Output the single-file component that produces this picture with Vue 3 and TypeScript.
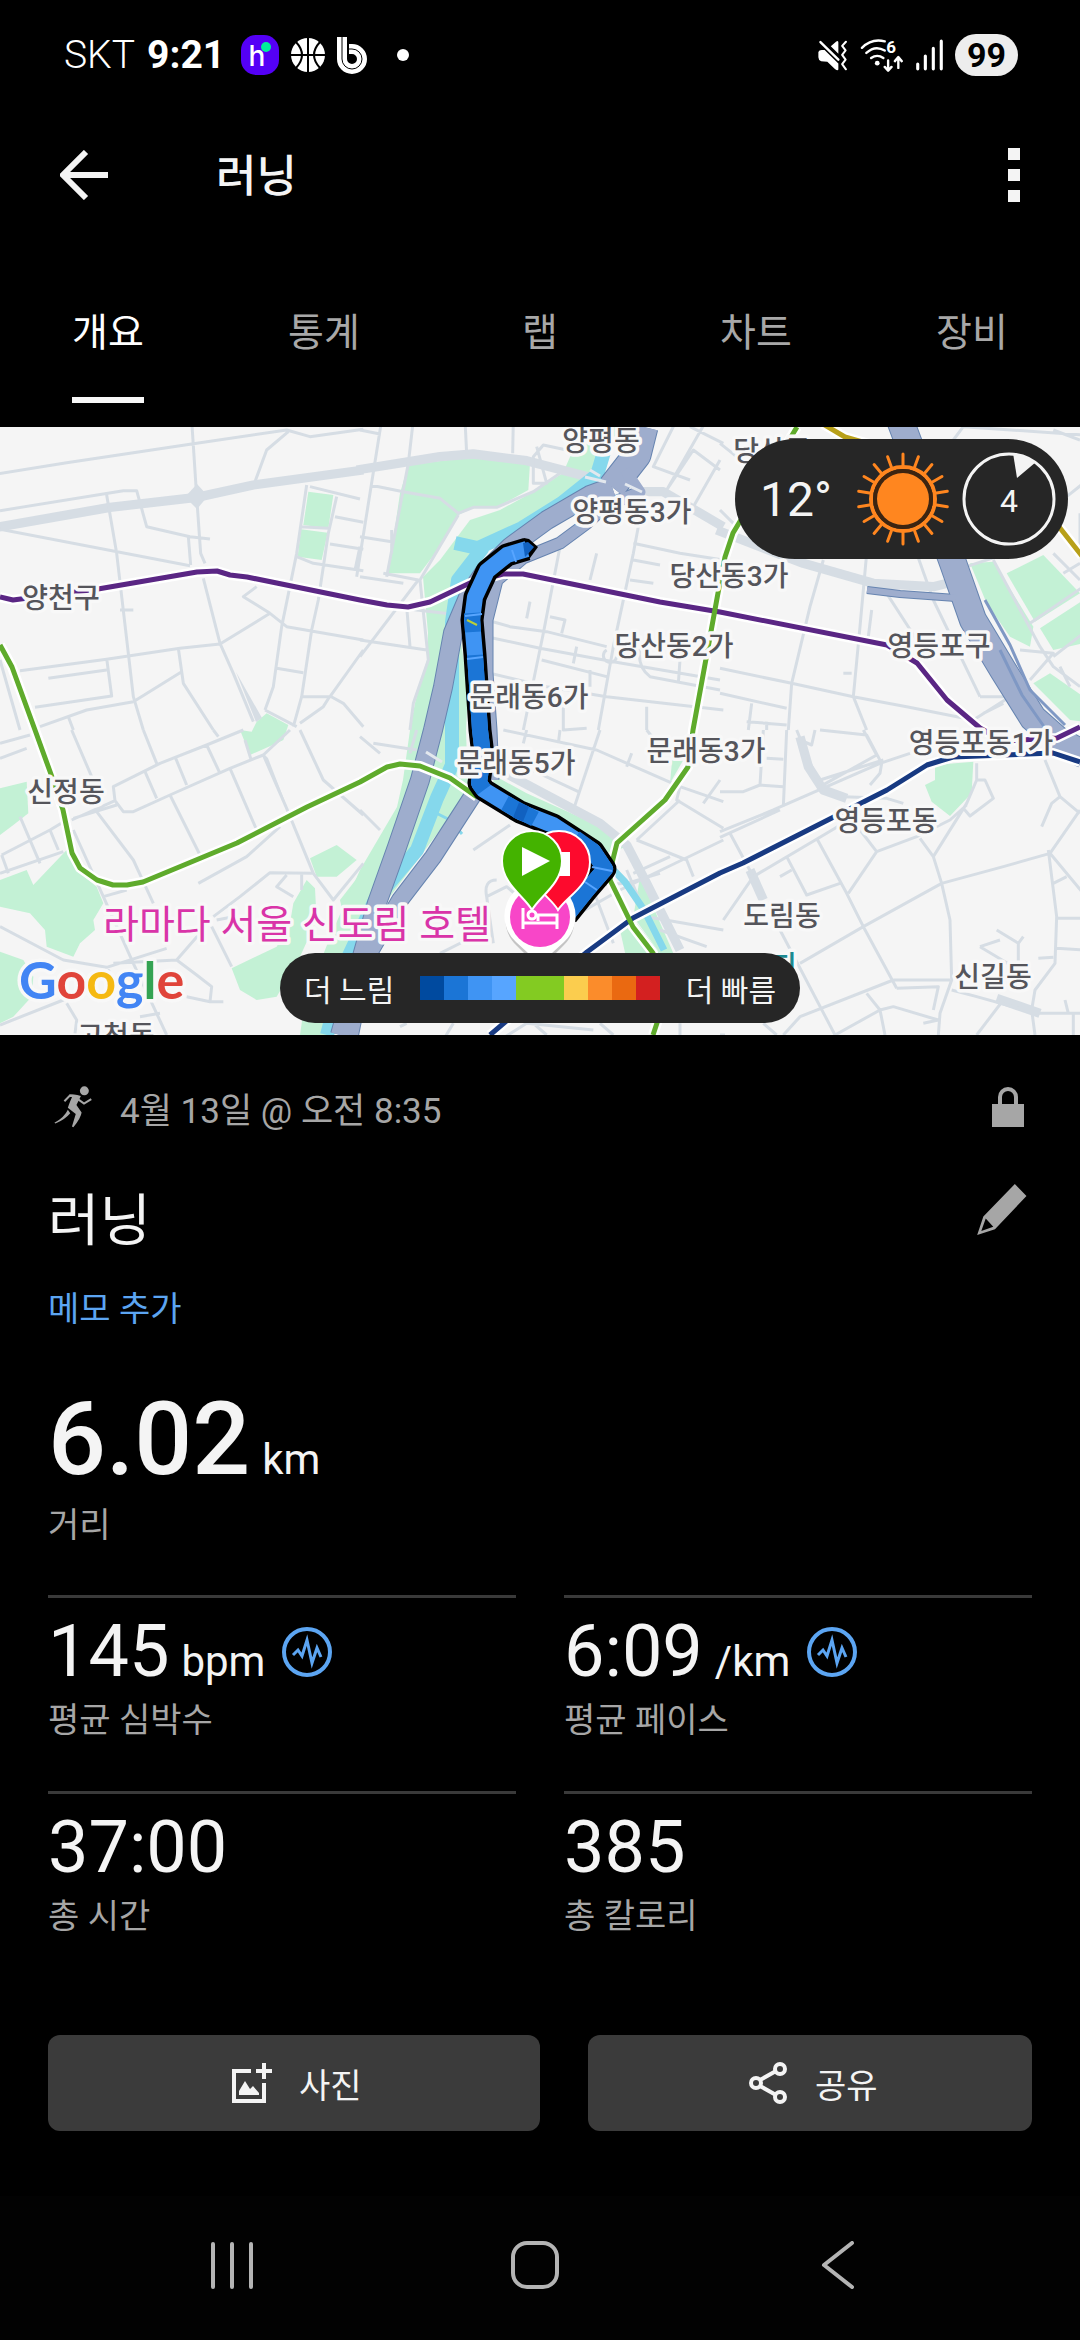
<script setup lang="ts">
import { ref } from 'vue'

interface Tile {
  x: number
  y: number
  parks: string[]
  wide: string
  roads: string
}

interface Label {
  text: string
  x: number
  y: number
}

interface Metric {
  value: string
  unit?: string
  label: string
  chart?: boolean
}

const tabs = ['개요', '통계', '랩', '차트', '장비']
const activeTab = ref('개요')

const paceColors = [
  '#004a9f', '#1b75d6', '#3f94f3', '#57a5ff', '#83cb22',
  '#83cb22', '#fbcd4e', '#fb8c2b', '#ea6911', '#d32020',
]

const metrics: Metric[] = [
  { value: '145', unit: 'bpm', label: '평균 심박수', chart: true },
  { value: '6:09', unit: '/km', label: '평균 페이스', chart: true },
  { value: '37:00', label: '총 시간' },
  { value: '385', label: '총 칼로리' },
]

const rays = Array.from({ length: 18 }, (_, i) => i * 20)

const labels: Label[] = [
  { text: '양평동', x: 601, y: 451 },
  { text: '양평동3가', x: 632, y: 522 },
  { text: '당산동3가', x: 729, y: 586 },
  { text: '당산동', x: 772, y: 461 },
  { text: '당산동2가', x: 674, y: 656 },
  { text: '문래동6가', x: 529, y: 707 },
  { text: '문래동5가', x: 516, y: 773 },
  { text: '문래동3가', x: 706, y: 761 },
  { text: '영등포구', x: 939, y: 656 },
  { text: '영등포동1가', x: 981, y: 753 },
  { text: '영등포동', x: 886, y: 831 },
  { text: '도림동', x: 782, y: 926 },
  { text: '신길동', x: 993, y: 987 },
  { text: '양천구', x: 61, y: 608 },
  { text: '신정동', x: 66, y: 802 },
  { text: '고척동', x: 116, y: 1046 },
]

/* Each tile covers 360 x 310 map units and is drawn on a 1080 x 930 grid. */
const tiles: Tile[] = [
  {
    x: 0,
    y: 420,
    parks: [
      '925,215 1000,225 985,325 910,315',
      '903,328 983,338 965,420 893,410',
      '755,935 770,905 800,880 865,915 850,960 830,970 750,1005 720,930',
    ],
    wide: 'M-10 322L330 262L590 232L760 195L1090 150',
    roads:
      'M-10 162L200 128L575 72L860 30L930 50L1090 28 M575 0L590 230L602 400L615 430 M610 475L660 670L700 760L760 905 M320 225L350 400L385 700L400 830L430 930 M0 272L370 212L410 212L440 320L570 350L630 357 M0 328L570 437 M565 350L572 435 M765 185L800 90L865 35 M920 195L890 400L845 620L820 800L795 870 M1010 230L985 340L955 540L935 630L905 830L880 920 M930 200L1080 237 M900 320L985 325 M1005 290L1090 307 M990 372L1090 388 M890 410L940 430L1090 452 M1080 380L1065 450 M60 752L320 718L540 685L660 672L810 580L860 620L1090 660 M810 580L730 530L770 500 M145 775L320 750 M105 862L335 828L320 715 M535 685L550 790L640 930 M400 845L545 755 M120 920L260 870L400 845 M205 890L220 930 M360 570H400 M830 745L910 758 M905 830H990L1090 690 M990 828L970 860L900 910 M990 828L1030 850L1090 920 M795 870L890 920 M0 720L60 930',
  },
  {
    x: 360,
    y: 420,
    parks: ['145,135 330,112 510,130 505,210 410,262 340,262 295,285 240,380 180,460 85,460 120,220'],
    wide: 'M-10 150L240 110L340 102L500 122L720 180 M840 215L910 215L1090 320',
    roads:
      'M65 0L30 220L-10 470 M160 0L145 130L80 470 M315 0L320 100 M460 0L458 100 M0 30L60 42 M30 195L130 215L240 235L295 280L340 262L410 262L520 215L600 160 M295 285L180 480L205 720L160 850L150 930 M70 460L175 480L0 710 M130 490L0 470 M0 350L95 365 M95 330V400 M530 80L560 190L520 190V110L550 75L620 90 M140 560L150 680 M0 660L200 690 M0 540L170 570L300 585 M600 380L550 640L490 930 M710 400L690 480 M510 545L500 595 M380 600L450 620L560 635L740 680 M570 590L615 600L605 640 M380 650L540 685L760 725L1080 780 M650 680L640 730 M545 720L740 770 M390 760L560 800L740 830L1090 870 M850 240L820 400L760 680L715 930 M820 370L960 400L1090 420 M820 420L900 435 M810 480L880 490 M740 690A20 20 0 1 0 770 710 M840 680Q830 740 870 770L1080 810 M960 720L955 790 M950 0L880 140L990 180 M1040 0L920 210L1000 90L1080 150 M990 20L1090 70 M1080 120L1000 260 M690 750V800 M610 840V930L680 925 M860 860V930',
  },
  {
    x: 720,
    y: 420,
    parks: [
      '750,430 820,425 940,620 930,680 870,650 800,550',
      '860,460 970,405 1080,520 945,605',
      '960,625 1090,540 1090,670 1000,690',
      '940,790 990,760 1090,830 1090,905 1050,900',
    ],
    wide: 'M-10 330L250 430L460 490L640 500L700 485',
    roads:
      'M0 70L50 110 M0 270L50 320 M310 420L270 560L215 790L205 930 M440 400L420 620L400 830L440 930 M590 400L640 540L780 830 M500 520L610 690 M455 570L445 650 M370 760H395 M0 745L215 790L400 830L560 860L760 900 M0 820L200 865 M95 850L85 930 M140 905V930 M80 905L200 915 M780 830L870 830L760 900 M790 880L850 850 M610 520L700 540 M820 420L960 680L1000 740L1080 800 M740 440L980 360 M1000 400L1080 480 M930 610L1090 500 M1000 710L1090 640 M900 690L1000 700L930 780 M1030 460L1080 430 M1080 280V400 M1000 30L1080 60 M700 60L730 20L1090 45 M1040 230L1090 190 M1020 740L1050 800',
  },
  {
    x: 0,
    y: 730,
    parks: [
      '0,175 80,155 85,250 40,285 0,315',
      '0,450 80,420 100,465 200,360 240,430 290,470 310,520 280,570 285,600 240,640 220,680 140,650 135,600 90,550 0,530',
      '0,665 70,690 100,740 95,800 40,860 0,880',
      '930,385 1010,345 1070,390 1010,440 950,440',
      '695,715 830,650 870,580 880,520 920,450 945,475 950,570 900,680 830,800 770,810 720,780',
      '1020,510 1090,420 1090,620 1040,600',
    ],
    wide: '',
    roads:
      'M215 270L345 212L340 170L480 100L620 45L730 0 M345 212L370 245H400L510 195L690 115L790 75L870 0 M435 125L470 205 M525 80L560 165 M620 45L660 130 M690 115L770 300 M510 195L600 375 M430 0L470 100 M215 0L275 140 M220 265L350 225 M290 245L400 390L460 520 M60 260L120 400 M5 375L150 300L200 270 M0 430L190 365 M5 375L25 430 M150 300L175 360 M220 300L310 500L400 700L500 915 M0 590L190 690L320 712L500 655 M0 885L190 810L330 720 M310 500L380 480 M640 560L720 500L810 428L940 430L1000 510L1090 400 M595 460L740 380L840 290 M860 435L830 470L880 500 M905 430V480 M340 700L530 690L590 735L635 770L630 815L560 800 M630 815H670 M530 690L600 610 M635 590L695 710 M200 820L230 870L225 910 M420 860L480 850 M650 570L700 560 M900 0L970 150L1090 255 M790 75L860 235L940 430 M0 40L90 15 M0 85L80 55 M640 0L655 20 M735 30L752 85',
  },
  {
    x: 360,
    y: 730,
    parks: [
      '400,135 500,190 700,280 800,350 740,370 580,290 400,190',
      '780,600 830,580 900,670 800,690',
      '840,440 940,670 900,670 820,560',
      '940,50 970,90 930,160',
    ],
    wide: 'M400 110L720 280L800 345L860 460L960 660',
    roads:
      'M0 20L60 70 M40 40L170 60 M170 0L150 70 M0 240L60 300 M340 360L450 285 M430 0L710 60L960 170L1090 215 M430 80L655 185 M500 0L490 40 M720 0L640 240 M600 0L595 40 M800 110L815 70 M860 0L900 50 M960 170L950 210L1090 295 M1080 150L1030 220 M830 330L960 210 M830 330L980 390L1000 440 M640 560L780 480L1090 330 M640 470L800 460L900 430 M800 420L860 560L1090 600 M700 480L760 640 M380 500Q370 450 410 450 M240 670L320 630 M930 380L820 430 M900 600L1040 650 M250 930L280 880 M420 930L500 880L700 900 M520 880L560 915 M720 880L760 915 M120 890L140 880 M400 640L380 500L440 470L520 540 M960 880V915',
  },
  {
    x: 720,
    y: 730,
    parks: ['645,105 760,95 755,190 690,258 635,215 615,165 645,150'],
    wide: 'M240 20L265 110L310 180L380 205 M90 420L130 510 M830 805L960 850',
    roads:
      'M0 305L160 240L480 100L570 70 M0 322L180 240 M200 0L190 230 M130 0L120 165 M0 185H70L120 165L190 170 M140 85L190 88 M230 0L300 170L470 75L430 0 M240 30L275 45L285 0 M300 0L440 15L485 100L480 130L450 165 M300 150L490 90 M370 200L500 205L550 220 M30 310L100 440L10 570 M100 440L320 310L420 250 M290 325L380 490L430 590L530 775 M200 380L260 495L360 460 M180 440L215 420 M420 300L470 365L385 490 M470 365L590 320L690 270L740 225 M600 325L640 380L740 220L770 150 M640 380L665 460L690 570L695 750L660 850L655 915 M665 460L430 590L240 700 M665 460L850 410L990 370L1080 240 M520 750L240 860L190 915 M520 750H690 M530 775L655 770L640 840 M770 100V150L795 150L820 205L750 258L730 235 M975 90L1020 200L1080 250 M1020 200L995 220L965 290 M985 360L1010 560L1005 700L945 780L935 840L945 915 M990 370L1090 490 M1000 460L1040 440 M1010 565H1090 M1010 655L1090 660 M955 685L1000 682 M695 780L770 800L950 850H1090 M830 600L895 640L910 620 M895 640V700 M780 650L840 630 M780 650L880 710 M180 600L345 915 M345 915L480 840L520 830L655 870L610 880 M440 790L480 840L495 915 M130 880L170 915 M850 810L770 915 M1035 810L1045 850 M1060 850V915 M0 915H15',
  },
]
</script>

<template>
  <div class="screen">
    <header class="status">
      <div class="status-group">
        <span class="carrier">SKT</span>
        <time class="clock">9:21</time>
        <svg class="badge-h" viewBox="0 0 38 40" width="38" height="40" aria-hidden="true">
          <rect width="38" height="40" rx="15" fill="#5400f6" />
          <text x="16" y="31" text-anchor="middle" class="h-letter">h</text>
          <circle cx="25" cy="12" r="5" fill="#00f09a" />
        </svg>
        <svg viewBox="0 0 34 34" width="34" height="34" aria-hidden="true">
          <circle cx="17" cy="17" r="17" fill="#fff" />
          <path d="M17 0V34M0 17H34M5 4Q17 17 5 30M29 4Q17 17 29 30" stroke="#000" stroke-width="2" fill="none" />
        </svg>
        <svg class="badge-b" viewBox="0 0 30 37" width="30" height="37" aria-hidden="true">
          <path d="M5 0V22A10 10 0 1 0 15 12H12" fill="none" stroke="#fff" stroke-width="10" />
          <path d="M5 0V22A10 10 0 1 0 15 12H12" fill="none" stroke="#000" stroke-width="1" />
        </svg>
        <i class="more-dot"></i>
      </div>
      <div class="status-group right">
        <svg viewBox="808 120 90 90" width="31" height="31" aria-hidden="true">
          <path d="M812 155Q814 148 824 149H830L870 188V206Q868 210 860 204L838 183Q828 183 820 182Q812 178 812 170Z M848 138L864 124Q870 120 870 127V160Z" fill="#fff" />
          <path d="M818 126L870 177" stroke="#fff" stroke-width="7" stroke-linecap="round" />
          <path d="M892 125L881 137L891 150L881 163L891 177L881 190L892 205" fill="none" stroke="#fff" stroke-width="6" stroke-linecap="round" stroke-linejoin="round" />
        </svg>
        <svg viewBox="938 114 128 100" width="44" height="34" aria-hidden="true">
          <circle cx="988" cy="188" r="7" fill="#fff" />
          <g fill="none" stroke="#fff" stroke-width="7" stroke-linecap="round" stroke-linejoin="round">
            <path d="M970 173Q988 160 1006 173M956 158Q982 134 1010 151M943 143Q972 114 1010 124" />
            <path d="M1020 180V208M1010 199L1020 210L1030 199M1050 202V172M1040 182L1050 170L1060 182" />
          </g>
          <text x="1029" y="159" text-anchor="middle" class="wifi-six">6</text>
        </svg>
        <svg viewBox="1092 118 78 92" width="27" height="32" aria-hidden="true">
          <path d="M1097 190V204M1119 167V204M1142 145V204M1165 124V204" stroke="#fff" stroke-width="9" stroke-linecap="round" />
        </svg>
        <span class="battery">99</span>
      </div>
    </header>

    <div class="appbar">
      <button class="icon-button" aria-label="뒤로">
        <svg viewBox="0 0 48 50" width="48" height="50">
          <path d="M48 25H4M26 2L3 25L26 48" fill="none" stroke="#f4f4f4" stroke-width="6" />
        </svg>
      </button>
      <h1>러닝</h1>
      <button class="icon-button menu" aria-label="더보기"><i></i><i></i><i></i></button>
    </div>

    <nav class="tabs">
      <button
        v-for="tab in tabs"
        :key="tab"
        :class="{ active: tab === activeTab }"
        @click="activeTab = tab"
      ><span>{{ tab }}</span></button>
    </nav>

    <section class="map">
      <svg class="canvas" viewBox="0 427 1080 608" preserveAspectRatio="xMidYMid slice">
        <rect y="427" width="1080" height="608" fill="#f5f5f5" />

        <g class="parks">
          <g v-for="tile in tiles" :key="`p${tile.x}-${tile.y}`" :transform="`translate(${tile.x} ${tile.y}) scale(.33333)`">
            <polygon v-for="park in tile.parks" :key="park" :points="park" />
          </g>
          <path d="M573 450L563 473L533 492L500 510L470 520L440 560L423 577L428 633L427 660L415 703L410 730L403 780L397 807L360 870L333 930L305 1000L300 1035H330L380 910L440 830L468 790L466 730L468 690L455 600L490 540L560 500L590 490L620 427H590Z" />
        </g>

        <g v-for="tile in tiles" :key="`r${tile.x}-${tile.y}`" class="roads" :transform="`translate(${tile.x} ${tile.y}) scale(.33333)`">
          <path :d="tile.wide" class="wide" />
          <path :d="tile.roads" />
        </g>
        <path d="M236 672L256 722L262 718ZM263 753L287 807L268 758Z" class="wedge" />
        <path d="M197 484L208 496L197 509L185 497Z" class="wedge" />

        <g class="water">
          <path d="M607 442L597 475L562 503L522 528L478 548M455 543L482 549L458 580L452 622L452 735L452 765L437 798L417 850L375 900L347 960L327 1035" stroke-width="14" />
          <path d="M484 790L520 812L560 832L600 856L625 882L644 910L664 950" stroke-width="7" />
          <path d="M430 810L450 820L462 834" stroke-width="3" />
        </g>

        <g class="highway edge">
          <path d="M644 427L637 455L612 487" stroke-width="29" />
          <path d="M612 487L590 495L547 520L510 547L484 573L470 593L453 633L443 687L433 730L420 780L397 847L377 903L340 1035" stroke-width="20" />
          <path d="M640 492L607 505L587 523L560 543L523 558L497 580L487 620L487 673L491 730L493 780" stroke-width="13" />
          <path d="M475 792L433 857L400 900L365 960L350 1035" stroke-width="18" />
          <path d="M900 420L930 500L953 563L973 620L1003 670L1033 718L1058 740L1085 755" stroke-width="28" />
          <path d="M867 590L900 594L956 598" stroke-width="8" />
        </g>
        <g class="highway">
          <path d="M644 427L637 455L612 487" stroke-width="27" />
          <path d="M612 487L590 495L547 520L510 547L484 573L470 593L453 633L443 687L433 730L420 780L397 847L377 903L340 1035" stroke-width="18" />
          <path d="M625 470L640 492L607 505L587 523L560 543L523 558L497 580L487 620L487 673L491 730L493 780" stroke-width="11" />
          <path d="M475 792L433 857L400 900L365 960L350 1035" stroke-width="16" />
          <path d="M900 420L930 500L953 563L973 620L1003 670L1033 718L1058 740L1085 755" stroke-width="26" />
          <path d="M867 590L900 594L956 598" stroke-width="6" />
        </g>
        <path d="M985 600L1010 645L1030 690L1065 725M1000 650L1022 695L1045 728" class="lane" />
        <path d="M585 477L606 482M625 484L642 492M426 752L442 762M590 470L600 476" class="bridge" />

        <g class="rail casing">
          <path d="M0 597L13 600L98 589L197 572L217 571L230 575L247 577L360 600L387 605L408 607L430 602L470 583L503 574L523 574L660 602L720 612L887 645L917 663L947 700L980 728L1003 741L1057 738L1080 727" />
          <path d="M490 1035L587 952L633 918L720 873L743 863L887 790L927 765L953 757L1053 753L1080 762" />
          <path d="M0 645L12 667L35 730L52 777L63 810L72 853L80 868L97 880L113 885L127 885L143 882L237 843L307 807L360 782L387 767L400 764L420 766L450 778L477 797" />
          <path d="M797 427L733 533L725 557L718 593L710 637L693 730L688 767L665 800L617 843L612 863L610 880L633 927L653 953L664 990L657 1023L653 1035" />
          <path d="M823 424L845 437L960 470L1060 528L1082 556" />
        </g>
        <g class="rail">
          <path stroke="#b8a019" d="M823 424L845 437L960 470L1060 528L1082 556" />
          <path stroke="#5a2684" d="M0 597L13 600L98 589L197 572L217 571L230 575L247 577L360 600L387 605L408 607L430 602L470 583L503 574L523 574L660 602L720 612L887 645L917 663L947 700L980 728L1003 741L1057 738L1080 727" />
          <path stroke="#183a82" d="M490 1035L587 952L633 918L720 873L743 863L887 790L927 765L953 757L1053 753L1080 762" />
          <path stroke="#5fab2c" d="M0 645L12 667L35 730L52 777L63 810L72 853L80 868L97 880L113 885L127 885L143 882L237 843L307 807L360 782L387 767L400 764L420 766L450 778L477 797" />
          <path stroke="#5fab2c" d="M797 427L733 533L725 557L718 593L710 637L693 730L688 767L665 800L617 843L612 863L610 880L633 927L653 953L664 990L657 1023L653 1035" />
        </g>

        <g class="route">
          <path fill="#000" d="M524 538L529 539L538 547L530 558L524 560Z" />
          <path stroke="#000" stroke-width="23" d="M527 549L507 555L487 571L475 597L472 620L475 655L480 730L483 755L479 783L484 790L520 812L553 825L593 851L605 869L587 890L567 915" />
          <path stroke="#3f94f3" stroke-width="16" d="M527 549L507 555L487 571L475 597L472 620L475 655L480 730L483 755L479 783L484 790L520 812L553 825L593 851L605 869L587 890L567 915" />
          <path stroke="#1b75d6" stroke-width="16" d="M475 655L480 730L483 755L479 783L484 790M472 613L473 632M505 803L535 819M575 838L593 851L605 869L587 890L567 915" />
          <path fill="#1161c0" d="M523 543L528 542L534 547L528 554L525 557Z" />
          <path stroke="#1161c0" stroke-width="16" d="M516 810L526 814" />
          <path stroke="#57a5ff" stroke-width="2" d="M465 616L482 614M467 659L483 657M512 550L516 562M585 882L597 890M592 867L612 871" />
          <path stroke="#b9cf3a" stroke-width="2" d="M467 620L477 625" />
        </g>

        <g class="names">
          <text v-for="label in labels" :key="label.text" :x="label.x" :y="label.y">{{ label.text }}</text>
          <text x="797" y="977" class="station">지</text>
          <text x="297" y="938" class="hotel">라마다 서울 신도림 호텔</text>
          <text x="19" y="999" class="google"><tspan fill="#4285f4">G</tspan><tspan fill="#e0443a">o</tspan><tspan fill="#f5b912">o</tspan><tspan fill="#4285f4">g</tspan><tspan fill="#34a353">l</tspan><tspan fill="#e0443a">e</tspan></text>
        </g>

        <g>
          <path d="M540 882A35 35 0 0 1 563 943L540 966L517 943A35 35 0 0 1 540 882Z" fill="#0003" transform="translate(0 3)" />
          <path d="M540 881A35 35 0 0 1 564 942L540 964L516 942A35 35 0 0 1 540 881Z" fill="#fff" />
          <circle cx="540" cy="917" r="30" fill="#f846c8" />
          <path d="M523 908V929M523 923H557M557 929V915H538V921" fill="none" stroke="#fff" stroke-width="3" />
          <circle cx="532" cy="915" r="4" fill="none" stroke="#fff" stroke-width="3" />
          <path d="M558 910C551 897 528 886 528 862A31 31 0 0 1 590 862C590 886 566 897 558 910Z" fill="#fd0a2d" stroke="#fff" stroke-width="2" />
          <rect x="546" y="852" width="24" height="24" fill="#fff" />
          <path d="M532 910C525 897 502 884 502 861A30 30 0 0 1 562 861C562 884 539 897 532 910Z" fill="#44b300" stroke="#fff" stroke-width="2" />
          <path d="M522 847L550 861L522 876Z" fill="#fff" />
        </g>
      </svg>

      <div class="weather">
        <span class="temp">12°</span>
        <svg viewBox="-47 -47 94 94" width="94" height="94" aria-hidden="true">
          <circle r="32" fill="none" stroke="#ff861f" stroke-width="4" />
          <circle r="28" fill="none" stroke="#3d2410" stroke-width="4" />
          <circle r="26" fill="#ff861f" />
          <path v-for="angle in rays" :key="angle" d="M0 -34V-45" :transform="`rotate(${angle})`" stroke="#ff861f" stroke-width="3" stroke-linecap="round" />
        </svg>
        <svg class="wind" viewBox="-47 -47 94 94" width="94" height="94" aria-hidden="true">
          <circle r="45" fill="none" stroke="#f4f4f4" stroke-width="3" />
          <path d="M4 -46Q17 -44 27 -37L8 -21Z" fill="#f4f4f4" />
          <text y="13" text-anchor="middle">4</text>
        </svg>
      </div>

      <div class="legend">
        <span>더 느림</span>
        <div class="scale"><i v-for="(color, i) in paceColors" :key="i" :style="{ background: color }"></i></div>
        <span>더 빠름</span>
      </div>
    </section>

    <main class="activity">
      <div class="meta">
        <svg viewBox="155 139 112 122" width="40" height="42" aria-hidden="true">
          <circle cx="244" cy="153" r="13" fill="#a6a6a6" />
          <path d="M186 183L202 167L222 168M225 177L243 190L264 177" fill="none" stroke="#a6a6a6" stroke-width="6" />
          <path d="M200 164Q222 162 234 168L221 194L236 216Q234 232 212 259L208 257L219 220L196 202Q204 180 208 172Z M196 208L203 218Q188 236 160 248L157 246Q186 230 196 208Z" fill="#a6a6a6" />
        </svg>
        <time>4월 13일 @ 오전 8:35</time>
        <svg class="lock" viewBox="0 0 32 40" width="32" height="40" aria-label="비공개">
          <path d="M8 20V10A8 8 0 0 1 24 10V20" fill="none" stroke="#a6a6a6" stroke-width="4" />
          <rect y="17" width="32" height="23" fill="#a6a6a6" />
        </svg>
      </div>

      <div class="title">
        <h2>러닝</h2>
        <button class="icon-button" aria-label="이름 편집">
          <svg viewBox="1269 432 145 149" width="50" height="51">
            <path d="M1379 432L1413 467L1321 564L1269 581L1287 527Z M1294 533L1281 569L1316 557Z" fill="#a6a6a6" fill-rule="evenodd" />
          </svg>
        </button>
      </div>
      <a href="#memo" class="memo">메모 추가</a>

      <div class="distance"><strong>6.02</strong><span>km</span></div>
      <p class="caption">거리</p>

      <div class="metrics">
        <div v-for="metric in metrics" :key="metric.label" class="metric">
          <div class="figure">
            <strong>{{ metric.value }}</strong>
            <span v-if="metric.unit">{{ metric.unit }}</span>
            <button v-if="metric.chart" class="icon-button" :aria-label="`${metric.label} 차트`">
              <svg viewBox="0 0 50 50" width="50" height="50">
                <circle cx="25" cy="25" r="23" fill="none" stroke="#5ca5f2" stroke-width="4" />
                <path d="M11 28L16 23L20 29L25 13L30 36L35 21L39 30" fill="none" stroke="#5ca5f2" stroke-width="3" />
              </svg>
            </button>
          </div>
          <p class="caption">{{ metric.label }}</p>
        </div>
      </div>

      <div class="actions">
        <button class="photo">
          <svg viewBox="233 2061 40 40" width="40" height="40" aria-hidden="true">
            <path d="M252 2069H235V2099H265V2081" fill="none" stroke="#f4f4f4" stroke-width="4" />
            <path d="M257 2069H273M265 2061V2077" stroke="#f4f4f4" stroke-width="4" />
            <path d="M240 2093V2089L246 2079L251 2087L254 2084L260 2091V2093Z" fill="#f4f4f4" />
          </svg>
          사진
        </button>
        <button class="share">
          <svg viewBox="747 2062 40 42" width="40" height="42" aria-hidden="true">
            <g fill="none" stroke="#f4f4f4" stroke-width="4">
              <circle cx="779" cy="2069" r="5" />
              <circle cx="755" cy="2083" r="5" />
              <circle cx="779" cy="2097" r="5" />
              <path d="M759 2080L775 2071M759 2086L775 2095" />
            </g>
          </svg>
          공유
        </button>
      </div>
    </main>

    <footer class="system-nav">
      <button class="icon-button" aria-label="최근 앱">
        <svg viewBox="0 0 48 48" width="48" height="48">
          <path d="M5 3V46M24 3V46M43 3V46" stroke="#b4b4b4" stroke-width="4" stroke-linecap="round" />
        </svg>
      </button>
      <button class="icon-button" aria-label="홈">
        <svg viewBox="0 0 48 48" width="48" height="48">
          <rect x="2" y="2" width="44" height="44" rx="14" fill="none" stroke="#b4b4b4" stroke-width="4" />
        </svg>
      </button>
      <button class="icon-button" aria-label="이전">
        <svg viewBox="0 0 48 48" width="48" height="48">
          <path d="M38 2L10 24L38 46" fill="none" stroke="#b4b4b4" stroke-width="4" stroke-linecap="round" stroke-linejoin="round" />
        </svg>
      </button>
    </footer>
  </div>
</template>

<style>
body {
  background: #000;
}
</style>

<style scoped>
.screen {
  min-height: 100vh;
  display: flex;
  flex-direction: column;
  background: #000;
  color: #f4f4f4;
  font-family: Roboto, "Noto Sans CJK KR", sans-serif;
}

svg {
  display: block;
  flex: none;
}

button {
  font: inherit;
  color: inherit;
  background: none;
  border: 0;
  padding: 0;
  cursor: pointer;
}

h1,
h2,
p {
  margin: 0;
}

.status {
  display: flex;
  justify-content: space-between;
  align-items: center;
  height: 110px;
  padding: 0 62px 0 64px;
  color: #fff;
  font-size: 39px;
}

.status-group {
  display: flex;
  align-items: center;
  gap: 12px;
}

.carrier {
  font-weight: 300;
}

.clock {
  font-weight: 700;
}

.badge-h {
  margin-left: 4px;
}

.h-letter {
  fill: #fff;
  font: 500 28px Inter, sans-serif;
}

.more-dot {
  width: 12px;
  height: 12px;
  margin-left: 18px;
  border-radius: 50%;
  background: #fff;
}

.wifi-six {
  fill: #fff;
  font: 700 50px Roboto, sans-serif;
}

.battery {
  width: 63px;
  border-radius: 21px;
  background: #ededed;
  color: #000;
  font-size: 34px;
  font-weight: 700;
  line-height: 42px;
  text-align: center;
}

.appbar {
  display: flex;
  align-items: center;
  height: 130px;
  padding: 0 60px;
}

.appbar h1 {
  margin-left: 108px;
  padding-top: 4px;
  font-size: 44px;
  font-weight: 500;
  line-height: 64px;
}

.menu {
  display: grid;
  gap: 9px;
  margin-left: auto;
}

.menu i {
  width: 12px;
  height: 12px;
  background: #f4f4f4;
}

.tabs {
  display: grid;
  grid-template-columns: repeat(5, 1fr);
  justify-items: center;
  padding: 64px 0 24px;
}

.tabs button {
  padding-bottom: 35px;
  border-bottom: 6px solid transparent;
  color: #a8a8a8;
  font-size: 39px;
  line-height: 58px;
}

.tabs .active {
  border-color: #f8f8f8;
  color: #fff;
}

.map {
  position: relative;
}

.canvas {
  width: 100%;
  height: 608px;
}

.parks {
  fill: #c3f1d5;
}

.roads {
  fill: none;
  stroke: #d6dde4;
  stroke-width: 9;
  stroke-linejoin: round;
}

.wide {
  stroke-width: 28;
}

.wedge {
  fill: #d6dde4;
}

.water {
  fill: none;
  stroke: #85d8ec;
  stroke-linejoin: round;
}

.highway {
  fill: none;
  stroke: #9eadcd;
  stroke-linejoin: round;
}

.highway.edge {
  stroke: #6684b0;
}

.lane {
  fill: none;
  stroke: #7f98c4;
  stroke-width: 3;
}

.bridge {
  stroke: #e3e8ee;
  stroke-width: 3;
}

.rail {
  fill: none;
  stroke-width: 5;
  stroke-linejoin: round;
}

.rail.casing {
  stroke: #fff;
  stroke-width: 10;
}

.route {
  fill: none;
  stroke-linejoin: round;
}

.names {
  fill: #55555b;
  stroke: #f8f8f8;
  stroke-width: 7;
  stroke-linejoin: round;
  paint-order: stroke;
  font-size: 28px;
  font-weight: 500;
  text-anchor: middle;
}

.names .station {
  fill: #1c8a92;
  font-size: 30px;
  text-anchor: end;
}

.names .hotel {
  fill: #d934a8;
  font-size: 39px;
  font-weight: 400;
}

.names .google {
  font-family: Lato, sans-serif;
  font-size: 52px;
  font-weight: 700;
  text-anchor: start;
}

.weather {
  position: absolute;
  top: 12px;
  right: 12px;
  display: flex;
  align-items: center;
  height: 120px;
  padding: 0 12px 0 25px;
  border-radius: 60px;
  background: #262626;
}

.temp {
  margin-right: 24px;
  font-size: 48px;
}

.wind {
  margin-left: 12px;
  fill: #f4f4f4;
  font-size: 32px;
}

.legend {
  position: absolute;
  left: 50%;
  bottom: 12px;
  display: flex;
  justify-content: space-between;
  align-items: center;
  width: 520px;
  height: 70px;
  padding: 0 24px;
  box-sizing: border-box;
  transform: translateX(-50%);
  border-radius: 35px;
  background: #262626;
  font-size: 30px;
}

.scale {
  display: flex;
}

.scale i {
  width: 24px;
  height: 24px;
}

.activity {
  padding: 48px 48px 0;
}

.meta {
  display: flex;
  align-items: center;
  height: 48px;
  padding: 0 8px 0 5px;
  color: #a6a6a6;
  font-size: 35px;
}

.meta time {
  margin-left: 27px;
}

.lock {
  margin-left: auto;
}

.title {
  display: flex;
  justify-content: space-between;
  align-items: flex-start;
  margin-top: 50px;
  padding-right: 5px;
}

.title .icon-button {
  margin-top: 3px;
}

.title h2 {
  font-size: 56px;
  font-weight: 400;
  line-height: 80px;
}

.memo {
  display: block;
  margin-top: 24px;
  color: #5ca5f2;
  font-size: 34px;
  line-height: 48px;
  text-decoration: none;
}

.distance {
  display: flex;
  align-items: baseline;
  gap: 12px;
  margin-top: 52px;
  font-size: 42px;
  line-height: 48px;
}

.distance strong {
  font-size: 102px;
  font-weight: 500;
  line-height: 108px;
}

.caption {
  margin-top: 8px;
  color: #a6a6a6;
  font-size: 34px;
  line-height: 48px;
}

.metrics {
  display: grid;
  grid-template-columns: 1fr 1fr;
  column-gap: 48px;
  margin-top: 46px;
}

.metric {
  padding: 18px 0 47px;
  border-top: 3px solid #3a3a3a;
}

.figure {
  display: flex;
  align-items: baseline;
  height: 72px;
  font-size: 42px;
  line-height: 48px;
}

.figure strong {
  font-size: 72px;
  font-weight: 400;
  line-height: 72px;
}

.figure span {
  margin-left: 12px;
}

.figure .icon-button {
  align-self: center;
  margin-left: 17px;
}

.actions {
  display: flex;
  gap: 48px;
  margin-top: 48px;
}

.actions button {
  display: flex;
  justify-content: center;
  align-items: center;
  gap: 27px;
  height: 96px;
  padding-left: 6px;
  border-radius: 12px;
  background: #3b3b3b;
  font-size: 34px;
}

.photo {
  flex: 41;
}

.share {
  flex: 37;
}

.system-nav {
  display: grid;
  grid-template-columns: repeat(3, 1fr);
  justify-items: center;
  align-items: center;
  height: 138px;
  margin-top: auto;
  padding: 0 91px 6px 81px;
  background: #020202;
}
</style>
